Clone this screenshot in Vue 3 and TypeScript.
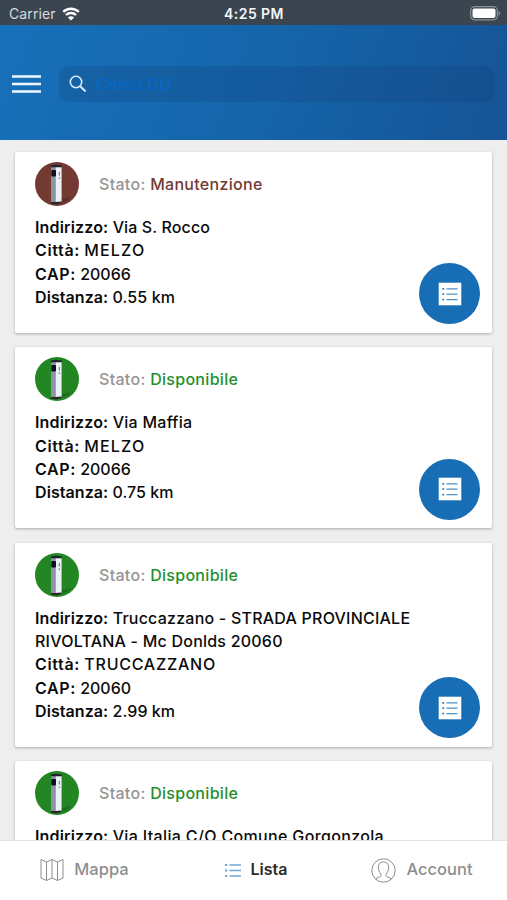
<script setup lang="ts">
interface Field {
  label: string
  value: string
  /** letter spacing of the value, in px */
  tracking: number
}

interface Station {
  id: number
  status: string
  available: boolean
  fields: Field[]
}

const labelTracking: Record<string, number> = {
  'Indirizzo:': 0.16,
  'Città:': 0.65,
  'CAP:': 0.6,
  'Distanza:': 0.08,
}

const stations: Station[] = [
  {
    id: 1,
    status: 'Manutenzione',
    available: false,
    fields: [
      { label: 'Indirizzo:', value: 'Via S. Rocco', tracking: 0.13 },
      { label: 'Città:', value: 'MELZO', tracking: 1.15 },
      { label: 'CAP:', value: '20066', tracking: 0 },
      { label: 'Distanza:', value: '0.55 km', tracking: 0.1 },
    ],
  },
  {
    id: 2,
    status: 'Disponibile',
    available: true,
    fields: [
      { label: 'Indirizzo:', value: 'Via Maffia', tracking: 0.27 },
      { label: 'Città:', value: 'MELZO', tracking: 1.15 },
      { label: 'CAP:', value: '20066', tracking: 0 },
      { label: 'Distanza:', value: '0.75 km', tracking: 0 },
    ],
  },
  {
    id: 3,
    status: 'Disponibile',
    available: true,
    fields: [
      {
        label: 'Indirizzo:',
        value: 'Truccazzano - STRADA PROVINCIALE RIVOLTANA - Mc Donlds 20060',
        tracking: 0.22,
      },
      { label: 'Città:', value: 'TRUCCAZZANO', tracking: 0.75 },
      { label: 'CAP:', value: '20060', tracking: 0 },
      { label: 'Distanza:', value: '2.99 km', tracking: 0.05 },
    ],
  },
  {
    id: 4,
    status: 'Disponibile',
    available: true,
    fields: [{ label: 'Indirizzo:', value: 'Via Italia C/O Comune Gorgonzola', tracking: 0.35 }],
  },
]
</script>

<template>
  <div class="screen">
    <div class="statusbar">
      <div class="carrier">
        <span>Carrier</span>
        <svg width="18" height="14" viewBox="0 0 18 14">
          <path d="M1.2 4.9a11.2 11.2 0 0 1 15.6 0" fill="none" stroke="#fff" stroke-width="2.5" />
          <path d="M4 8a7.2 7.2 0 0 1 10 0" fill="none" stroke="#fff" stroke-width="2.3" />
          <path d="M9 13.6 5.9 10.5a4.4 4.4 0 0 1 6.2 0z" fill="#fff" />
        </svg>
      </div>
      <span class="clock">4:25 PM</span>
      <svg class="battery" width="31" height="15" viewBox="0 0 31 15">
        <rect x="0.7" y="0.7" width="26.6" height="13.2" rx="4" fill="none" stroke="#8c9297" stroke-width="1.2" />
        <rect x="2.5" y="2.5" width="23" height="9.6" rx="2" fill="#fff" />
        <path d="M28.6 5v4.8c2-.9 2-3.9 0-4.8z" fill="#8c9297" />
      </svg>
    </div>

    <header class="header">
      <svg class="menu" width="30" height="18" viewBox="0 0 30 18">
        <path d="M0 1.5h29M0 9h29M0 16.5h29" stroke="#eef7ff" stroke-width="2.4" />
      </svg>
      <div class="search">
        <svg width="18" height="18" viewBox="0 0 18 18" fill="none" stroke="#d9efff" stroke-width="1.6">
          <circle cx="7" cy="7" r="5.7" />
          <path d="m11.2 11.2 5.4 5.3" stroke-width="1.9" />
        </svg>
        <span class="placeholder">Cerca CU</span>
      </div>
    </header>

    <main class="list">
      <article v-for="s in stations" :key="s.id" class="card">
        <div class="head">
          <svg class="avatar" :class="{ ok: s.available }" width="44" height="44" viewBox="0 0 44 44">
            <defs>
              <clipPath :id="`disc-${s.id}`"><circle cx="22" cy="22" r="22" /></clipPath>
            </defs>
            <g :clip-path="`url(#disc-${s.id})`">
              <rect class="disc" width="44" height="44" />
              <path d="M26 37l11-2-5 4-8 2z" fill="#000" opacity=".2" />
              <path d="M16 5v35.500l5.500 1V5z" fill="#8a94a4" />
              <path d="M20.800 5v36.500l5.800-1V5z" fill="#edf0f5" />
              <path d="M15.800 3.600 21 2.700l5.800.9v1.700h-11z" fill="#20242a" />
              <path d="M16 40h4.500l6.100-.5V41L21 42.500 16 41.500z" fill="#2a2426" />
              <rect x="16.300" y="8" width="4.700" height="6.500" rx="1" fill="#0b1020" />
              <path d="M24.300 10v3.500M24.300 15.500v1.500" stroke="#555d68" stroke-width="0.900" />
            </g>
          </svg>
          <p class="state">Stato: <span :class="s.available ? 'green' : 'red'">{{ s.status }}</span></p>
        </div>
        <p v-for="f in s.fields" :key="f.label" class="field">
          <b :style="{ letterSpacing: `${labelTracking[f.label]}px` }">{{ f.label }}</b>
          {{ ' ' }}
          <span :style="{ letterSpacing: `${f.tracking}px` }">{{ f.value }}</span>
        </p>
        <button v-if="s.fields.length > 1" class="fab" aria-label="Dettagli">
          <svg width="24" height="24" viewBox="0 0 24 24">
            <rect x="0.700" y="0.700" width="22.600" height="22.600" fill="#fff" />
            <path d="M8.500 6.800h11M8.500 12.200h11M8.500 17.600h11" stroke="#4c8fc7" stroke-width="1.200" />
            <path d="M4.300 6.800h1.900M4.300 12.200h1.900M4.300 17.600h1.900" stroke="#3c82bd" stroke-width="1.800" />
          </svg>
        </button>
      </article>
    </main>

    <nav class="tabs">
      <a class="tab mappa">
        <svg width="24" height="24" viewBox="0 0 24 24" fill="none" stroke="#8e8e8e" stroke-width="1">
          <path d="M1 1.500 6.500 4 12 1.500 17.500 4 23 1.500V20l-5.500 2.500L12 20l-5.500 2.500L1 20zM6.500 4v18.500M12 1.500V20M17.500 4v18.500" />
        </svg>
        <span>Mappa</span>
      </a>
      <a class="tab lista">
        <svg width="16" height="15" viewBox="0 0 16 15" stroke="#6fa8d8" stroke-width="1.300">
          <path d="M4.500 2H16M4.500 7.500H16M4.500 13H16" />
          <path d="M0 2h2.200M0 7.500h2.200M0 13h2.200" stroke-width="2" />
        </svg>
        <span>Lista</span>
      </a>
      <a class="tab account">
        <svg width="25" height="25" viewBox="0 0 25 25" fill="none" stroke="#8e8e8e" stroke-width="1">
          <circle cx="12.500" cy="12.500" r="11.700" />
          <path d="M4.600 21c1.200-1.700 5.600-1.800 5.600-3.600 0-1.700-2.900-3.600-2.900-8 0-3.400 2-5.500 5.200-5.500s5.200 2.100 5.200 5.500c0 4.400-2.900 6.300-2.900 8 0 1.800 4.400 1.900 5.600 3.600" />
        </svg>
        <span>Account</span>
      </a>
    </nav>
  </div>
</template>

<style>
body {
  margin: 0;
  background: #eee;
}
</style>

<style scoped>
.screen {
  width: 507px;
  height: 900px;
  display: flex;
  flex-direction: column;
  overflow: hidden;
  background: #eee;
  font-family: Inter, 'Liberation Sans', sans-serif;
  font-weight: 500;
  color: #0b0b0b;
}
p {
  margin: 0;
}
.statusbar {
  height: 25px;
  flex: none;
  display: grid;
  grid-template-columns: 1fr auto 1fr;
  align-items: center;
  padding: 2px 6px 0 9px;
  box-sizing: border-box;
  background: #3a454f;
  color: #f4f6f8;
  font-size: 14px;
}
.carrier {
  display: flex;
  align-items: center;
  gap: 6px;
  font-weight: 400;
  letter-spacing: 0.1px;
  color: #d5dbe0;
}
.clock {
  font-weight: 600;
  letter-spacing: 0.45px;
  margin-right: 2px;
}
.battery {
  justify-self: end;
}
.header {
  height: 115px;
  flex: none;
  display: flex;
  align-items: center;
  gap: 17px;
  padding: 3px 13px 0 12px;
  box-sizing: border-box;
  background: linear-gradient(110deg, #1771b9 0%, #1565ab 50%, #155496 100%);
}
.search {
  flex: 1;
  height: 36px;
  display: flex;
  align-items: center;
  gap: 9px;
  padding-left: 10px;
  border-radius: 9px;
  background: rgba(16, 60, 115, 0.22);
}
.placeholder {
  color: #0767c4;
  font-size: 16px;
  font-weight: 600;
  letter-spacing: 0.2px;
}
.list {
  flex: 1;
  min-height: 0;
  overflow: hidden;
  display: flex;
  flex-direction: column;
  gap: 14.600px;
  padding: 12px 15px 0;
}
.card {
  position: relative;
  flex: none;
  box-sizing: border-box;
  min-height: 180.800px;
  padding: 10px 20px 23.600px;
  background: #fff;
  border-radius: 2px;
  box-shadow: 0 1px 3px rgba(0, 0, 0, 0.28);
}
.head {
  display: flex;
  align-items: center;
  gap: 20px;
  height: 44px;
  margin-bottom: 10px;
}
.disc {
  fill: #733a33;
}
.ok .disc {
  fill: #228723;
}
.state {
  font-size: 16px;
  letter-spacing: 0.3px;
  color: #949494;
}
.red {
  color: #733a33;
}
.green {
  color: #238f2b;
}
.field {
  font-size: 16px;
  line-height: 23.300px;
}
.field b {
  font-weight: 600;
}
.fab {
  position: absolute;
  right: 12px;
  bottom: 8.500px;
  width: 61px;
  height: 61px;
  display: grid;
  place-items: center;
  padding: 0;
  border: 0;
  border-radius: 50%;
  background: #176eb5;
}
.tabs {
  height: 60px;
  flex: none;
  display: grid;
  grid-template-columns: repeat(3, 1fr);
  border-top: 1px solid #e2e2e2;
  box-sizing: border-box;
  padding-bottom: 1px;
  background: #fff;
}
.tab {
  display: flex;
  align-items: center;
  justify-content: center;
  gap: 10px;
  color: #8e8e8e;
  font-size: 16.500px;
  line-height: 20px;
}
.tab span {
  padding-bottom: 2px;
}
.lista {
  padding-left: 5px;
  color: #2a2a2a;
}
.lista span {
  font-size: 16px;
  font-weight: 600;
}
.account {
  padding-right: 1px;
}
</style>
